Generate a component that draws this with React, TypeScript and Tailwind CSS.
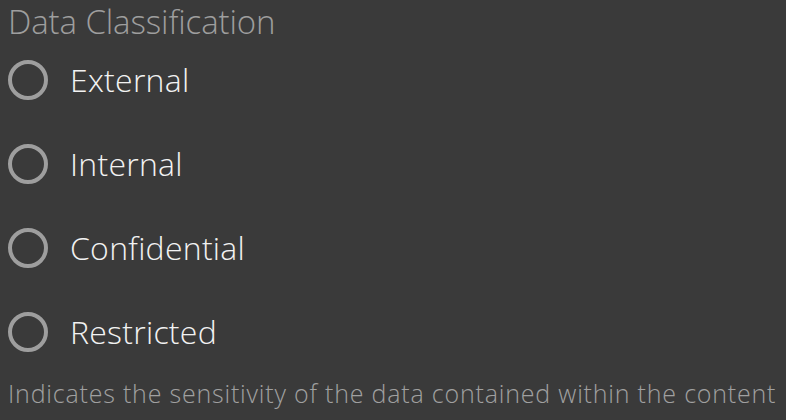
const options = ["External", "Internal", "Confidential", "Restricted"];

export default function App() {
  return (
    <div
      className="h-[420px] w-[786px] overflow-hidden bg-[#3a3a3a] px-2 text-white"
      style={{ fontFamily: '"Open Sans", sans-serif' }}
    >
      <div className="h-[38px] text-[33px] font-light leading-[44px] text-[#9e9e9e] tracking-[-0.1px]">Data Classification</div>
      <div className="flex flex-col">
        {options.map((o) => (
          <label key={o} className="flex h-[84px] items-center gap-[22px]">
            <span className="h-10 w-10 shrink-0 rounded-full border-4 border-[#9e9e9e]" />
            <span className="text-[32px] font-light leading-[40px] tracking-[0.25px] text-[#f2f2f2]">{o}</span>
          </label>
        ))}
      </div>
      <div className="text-[25px] font-light leading-[38px] tracking-[0.8px] text-[#a0a0a0]">
        Indicates the sensitivity of the data contained within the content
      </div>
    </div>
  );
}
